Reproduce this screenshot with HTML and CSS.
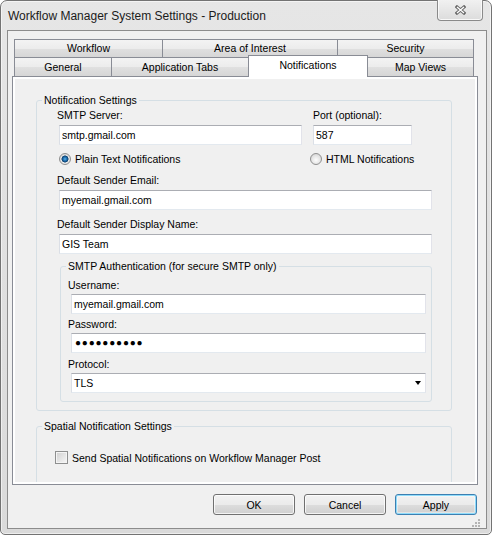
FILE: index.html
```html
<!DOCTYPE html>
<html lang="en">
<head>
<meta charset="utf-8">
<title>Workflow Manager System Settings - Production</title>
<link rel="stylesheet" href="styles.css">
</head>
<body>
<div class="window">
  <div class="titlebar">
    <span class="title">Workflow Manager System Settings - Production</span>
    <button class="close" aria-label="Close">
      <svg width="11" height="10" viewBox="0 0 11 10" aria-hidden="true">
        <path d="M2 2L9 8M9 2L2 8" stroke="#6a6a6a" stroke-width="3.2" stroke-linecap="square" fill="none"/>
        <path d="M2 2L9 8M9 2L2 8" stroke="#ffffff" stroke-width="1.3" fill="none"/>
      </svg>
    </button>
  </div>
  <div class="client">
    <div class="tabs">
      <div class="tabrow row1">
        <div class="tab t-workflow">Workflow</div>
        <div class="tab t-aoi">Area of Interest</div>
        <div class="tab t-security last">Security</div>
      </div>
      <div class="tabrow row2">
        <div class="tab t-general">General</div>
        <div class="tab t-apptabs">Application Tabs</div>
        <div class="tab t-notif selected">Notifications</div>
        <div class="tab t-map last">Map Views</div>
      </div>
    </div>
    <div class="panel">
      <div class="page">
        <fieldset class="group notif">
          <legend>Notification Settings</legend>
          <div class="body notif-body">
            <div class="row-server">
              <div class="field">
                <label class="lbl">SMTP Server:</label>
                <input class="txt" type="text" value="smtp.gmail.com">
              </div>
              <div class="field">
                <label class="lbl port">Port (optional):</label>
                <input class="txt" type="text" value="587">
              </div>
            </div>
            <div class="radios">
              <label class="opt"><span class="radio on"></span>Plain Text Notifications</label>
              <label class="opt"><span class="radio"></span>HTML Notifications</label>
            </div>
            <label class="lbl mt9">Default Sender Email:</label>
            <input class="txt" type="text" value="myemail.gmail.com">
            <label class="lbl mt8">Default Sender Display Name:</label>
            <input class="txt" type="text" value="GIS Team">
            <fieldset class="group auth">
              <legend>SMTP Authentication (for secure SMTP only)</legend>
              <div class="body auth-body">
                <label class="lbl">Username:</label>
                <input class="txt" type="text" value="myemail.gmail.com">
                <label class="lbl mt4">Password:</label>
                <div class="txt pw">●●●●●●●●●●</div>
                <label class="lbl mt5">Protocol:</label>
                <div class="txt combo"><span>TLS</span><span class="arrow"></span></div>
              </div>
            </fieldset>
          </div>
        </fieldset>
        <fieldset class="group spatial">
          <legend>Spatial Notification Settings</legend>
          <div class="body spatial-body">
            <label class="opt"><span class="check"></span>Send Spatial Notifications on Workflow Manager Post</label>
          </div>
        </fieldset>
      </div>
    </div>
    <div class="buttons">
      <button class="btn">OK</button>
      <button class="btn">Cancel</button>
      <button class="btn focused">Apply</button>
    </div>
    <svg class="grip" width="9" height="8" viewBox="0 0 9 8" aria-hidden="true">
      <rect x="6" y="0" width="2" height="2" fill="#b4b4b4"/>
      <rect x="3" y="3" width="2" height="2" fill="#b4b4b4"/>
      <rect x="6" y="3" width="2" height="2" fill="#b4b4b4"/>
      <rect x="0" y="6" width="2" height="2" fill="#b4b4b4"/>
      <rect x="3" y="6" width="2" height="2" fill="#b4b4b4"/>
      <rect x="6" y="6" width="2" height="2" fill="#b4b4b4"/>
    </svg>
  </div>
</div>
</body>
</html>
```
FILE: styles.css
```css
* { box-sizing: border-box; }

body {
  margin: 0;
  background: #ffffff;
  font-family: "Liberation Sans", Arial, sans-serif;
  font-size: 10.5px;
  line-height: 12px;
  color: #000;
}

.window {
  width: 492px;
  height: 535px;
  border: 1px solid #737373;
  border-radius: 7px 7px 5px 5px;
  background: linear-gradient(#e6e6e6, #dadada);
  box-shadow: inset 0 0 0 1px rgba(255, 255, 255, 0.55);
  padding: 0 4px 5px 6px;
  display: flex;
  flex-direction: column;
}

.titlebar {
  height: 29px;
  flex: none;
  display: flex;
  justify-content: space-between;
  align-items: flex-start;
}

.title {
  font-size: 12px;
  line-height: 14px;
  padding: 8px 0 0 1px;
  color: #1b1b1b;
}

.close {
  width: 46px;
  height: 21px;
  margin: -1px 4px 0 0;
  padding: 0;
  border: 1px solid #8a8a8a;
  border-top: 0;
  border-radius: 0 0 4px 4px;
  background: linear-gradient(#f1f1f1, #dcdcdc);
  box-shadow: inset 0 -1px 0 rgba(255, 255, 255, 0.8), inset 1px 0 0 rgba(255, 255, 255, 0.7), inset -1px 0 0 rgba(255, 255, 255, 0.7);
  display: flex;
  align-items: center;
  justify-content: center;
}

.client {
  flex: 1;
  position: relative;
  border: 1px solid #8c8c8c;
  background: #f0f0f0;
  padding-top: 8px;
}

/* tabs */
.tabs { margin: 0 12px 0 6px; }

.tabrow { display: flex; }

.tab {
  flex: none;
  text-align: center;
  border: 1px solid #898c95;
  border-bottom: 0;
  border-right: 0;
  background: linear-gradient(#f3f3f3 0%, #ececec 50%, #e0e0e0 51%, #d6d6d6 100%);
  white-space: nowrap;
}

.tab.last { border-right: 1px solid #898c95; }

.row1 .tab { height: 18px; padding-top: 2px; }
.row2 .tab { height: 19px; padding-top: 3px; }

.t-workflow { width: 148px; }
.t-aoi { width: 175px; }
.t-security { width: 137px; }
.t-general { width: 97px; }
.t-apptabs { width: 137px; }
.t-map { width: 107px; }

.row2 .tab.selected {
  width: 120px;
  height: 22px;
  margin: -2px -1px -1px 0;
  border-right: 1px solid #898c95;
  background: #ffffff;
  position: relative;
  z-index: 1;
}

/* panel */
.panel {
  margin: 0 8px 0 4px;
  height: 409px;
  border: 1px solid #898c95;
  background: #ffffff;
  padding: 2px;
}

.page {
  height: 100%;
  background: #f0f0f0;
  overflow: hidden;
  display: flow-root;
}

/* group boxes */
.group {
  border: 1px solid #d5dfe5;
  border-radius: 3px;
  padding: 0;
  min-width: 0;
}

.group > legend {
  padding: 0 2px;
  margin-left: 5px;
  line-height: 12px;
}

.notif { margin: 15px 23px 0 21px; }
.notif-body { padding: 3px 19px 8px 22px; }

.lbl {
  display: block;
  margin: 0 0 4px -2px;
  white-space: nowrap;
}
.lbl.port { margin-left: 0; }
.mt9 { margin-top: 9px; }
.mt8 { margin-top: 8px; }
.mt5 { margin-top: 5px; }
.mt4 { margin-top: 4px; }

.row-server {
  display: grid;
  grid-template-columns: 243px 99px;
  column-gap: 11px;
}

.field { display: flex; flex-direction: column; }

.txt {
  display: block;
  width: 100%;
  height: 20px;
  margin: 0;
  padding: 0 2px;
  border: 1px solid;
  border-color: #abadb3 #e2e3ea #e3e9ef #dbdfe6;
  background: #ffffff;
  font: inherit;
  line-height: 12px;
  color: #000;
  outline: none;
}

.pw {
  display: flex;
  align-items: center;
  font-size: 10px;
  letter-spacing: 0.8px;
  font-family: "Liberation Sans", "DejaVu Sans", sans-serif;
  padding-left: 3px;
}

.combo {
  display: flex;
  align-items: center;
  justify-content: space-between;
  padding: 0 4px 0 2px;
}

.arrow {
  width: 0;
  height: 0;
  border-left: 3.5px solid transparent;
  border-right: 3.5px solid transparent;
  border-top: 4px solid #000;
}

.radios {
  display: grid;
  grid-template-columns: 251px auto;
  height: 13px;
  margin-top: 7px;
}

.opt {
  display: flex;
  align-items: center;
  gap: 4px;
  white-space: nowrap;
}

.radio {
  flex: none;
  width: 12px;
  height: 12px;
  border-radius: 50%;
  border: 1px solid #8f8f8f;
  background: radial-gradient(circle at 50% 60%, #fdfdfd 0, #e4e4e4 55%, #cdcdcd 100%);
}

.radio.on {
  background:
    radial-gradient(circle at 50% 50%, #5fb4e8 0, #2577b8 1.6px, #0c4577 3px, #0a3a66 3.2px, rgba(10, 58, 102, 0) 3.8px),
    radial-gradient(circle at 50% 60%, #fdfdfd 0, #e4e4e4 55%, #cdcdcd 100%);
}

.auth { margin: 6px 0 0 1px; }
.auth-body { padding: 7px 5px 8px 10px; }
.auth-body .lbl { margin-left: -3px; margin-bottom: 3px; }
.auth-body .lbl.mt4 { margin-top: 4px; }
.auth-body .lbl.mt5 { margin-top: 5px; }

.spatial { margin: 9px 23px 0 21px; }
.spatial-body { padding: 19px 0 0 18px; height: 90px; }

.check {
  flex: none;
  width: 13px;
  height: 13px;
  border: 1px solid #8e8f8f;
  background: linear-gradient(135deg, #cfcfcf, #f7f7f7);
  box-shadow: inset 0 0 0 1px #f4f4f4;
}

/* buttons */
.buttons {
  display: flex;
  justify-content: flex-end;
  gap: 9px;
  margin: 9px 9px 0 0;
}

.btn {
  width: 82px;
  height: 21px;
  padding: 0;
  font: inherit;
  line-height: 12px;
  color: #000;
  border: 1px solid #707070;
  border-radius: 3px;
  background: linear-gradient(#f2f2f2 0%, #ebebeb 50%, #dddddd 51%, #cfcfcf 100%);
  box-shadow: inset 0 0 0 1px rgba(255, 255, 255, 0.75);
}

.btn.focused {
  border-color: #3c7fb1;
  box-shadow: inset 0 0 0 1px #8fdcfb, inset 0 0 0 2px rgba(255, 255, 255, 0.4);
}

.grip {
  position: absolute;
  right: 5px;
  bottom: 1px;
}
```
